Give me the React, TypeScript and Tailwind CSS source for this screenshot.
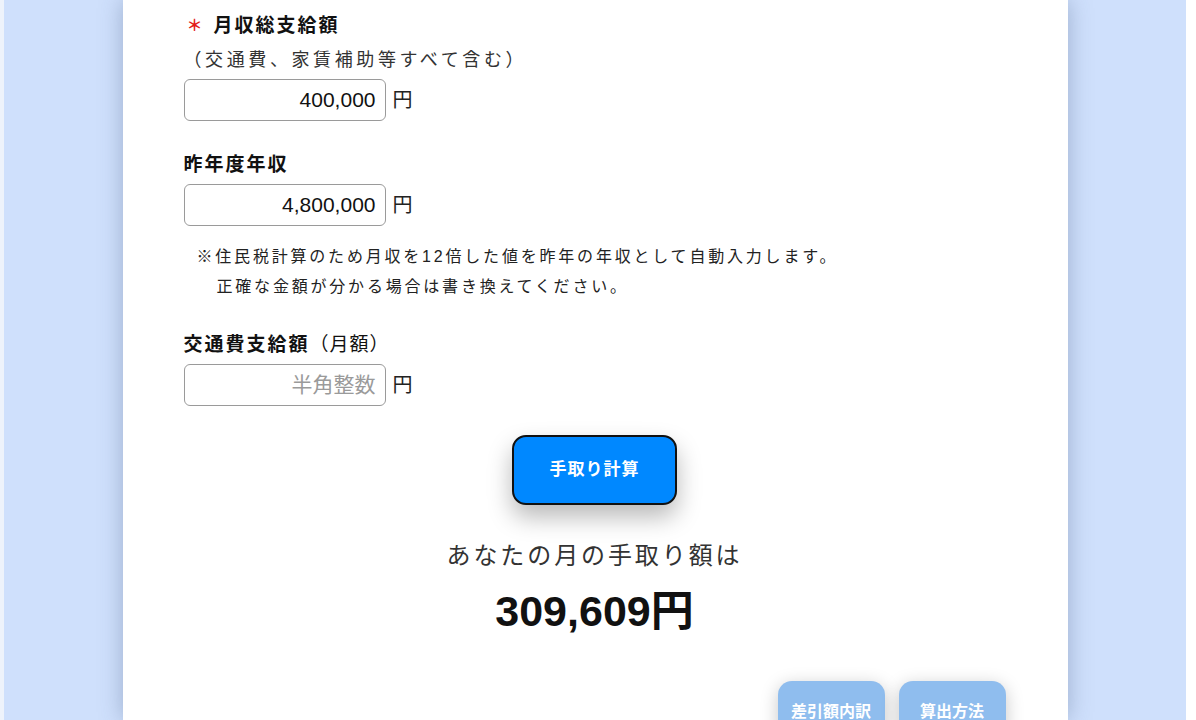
import React from "react"

const font = { fontFamily: '"Liberation Sans", "Noto Sans CJK JP", sans-serif' }

function YenInput({ value, placeholder }: { value?: string; placeholder?: string }) {
  return (
    <div className="flex items-center gap-[7px]">
      <input
        readOnly
        value={value ?? ""}
        placeholder={placeholder}
        className="w-[202px] h-[42px] rounded-[6px] border border-[#9a9a9a] bg-white pr-[9px] text-right text-[21px] text-[#111] placeholder:text-[#9a9a9a] outline-none"
        style={font}
      />
      <span className="text-[20px] text-[#222]">円</span>
    </div>
  )
}

function SubButton({ label }: { label: string }) {
  return (
    <button className="flex h-[60px] w-[107px] items-start justify-center rounded-[14px] bg-[#8fbdee] pt-[19px] text-[16px] leading-[24px] font-bold text-white shadow-[0_4px_18px_rgba(0,0,0,0.22)]">
      {label}
    </button>
  )
}

export default function App() {
  return (
    <div className="flex h-[720px] w-full overflow-hidden bg-white" style={font}>
      <div className="w-[4px] bg-[#eef3fb]" />
      <div className="flex flex-1 justify-center bg-[#cfe0fc]">
        <div className="flex w-[945px] flex-col bg-white pl-[61px] pr-[62px] pt-[12px] shadow-[0_0_22px_rgba(60,80,120,0.35)]">
          {/* 月収 */}
          <div className="flex h-[28px] items-center text-[19px] font-bold tracking-[2px] text-[#111]">
            <span className="ml-[3px] mr-[9px] text-[16px] text-[#e31b1b]">＊</span>
            月収総支給額
          </div>
          <div className="mt-[7px] flex h-[28px] items-center text-[18px] tracking-[3.6px] text-[#333]">
            （交通費、家賃補助等すべて含む）
          </div>
          <div className="mt-[5px]">
            <YenInput value="400,000" />
          </div>

          {/* 昨年度年収 */}
          <div className="mt-[30px] flex h-[28px] items-center text-[19px] font-bold tracking-[2px] text-[#111]">
            昨年度年収
          </div>
          <div className="mt-[5px]">
            <YenInput value="4,800,000" />
          </div>
          <div className="mt-[16px] pl-[13px] text-[16px] leading-[30px] tracking-[2.8px] text-[#222]">
            <div>※住民税計算のため月収を12倍した値を昨年の年収として自動入力します。</div>
            <div className="pl-[20px]">正確な金額が分かる場合は書き換えてください。</div>
          </div>

          {/* 交通費 */}
          <div className="mt-[29px] flex h-[28px] items-center text-[19px] font-bold tracking-[2px] text-[#111]">
            交通費支給額<span className="font-normal tracking-[1px]">（月額）</span>
          </div>
          <div className="mt-[5px]">
            <YenInput placeholder="半角整数" />
          </div>

          <div className="mt-[29px] flex justify-center">
            <button className="h-[70px] w-[165px] rounded-[14px] border-2 border-[#111] bg-[#0088ff] text-[17px] font-bold tracking-[1px] text-white shadow-[0_12px_24px_rgba(0,0,0,0.28)]">
              手取り計算
            </button>
          </div>

          <div className="mt-[33px] flex h-[36px] items-center justify-center text-[24px] tracking-[2.9px] text-[#333]">
            あなたの月の手取り額は
          </div>
          <div className="mt-[13px] flex h-[48px] items-center justify-center text-[43px] font-bold text-[#111]">
            309,609円
          </div>

          <div className="mt-[46px] flex justify-end gap-[14px]">
            <SubButton label="差引額内訳" />
            <SubButton label="算出方法" />
          </div>
        </div>
      </div>
      <div className="w-[10px] bg-white" />
    </div>
  )
}
